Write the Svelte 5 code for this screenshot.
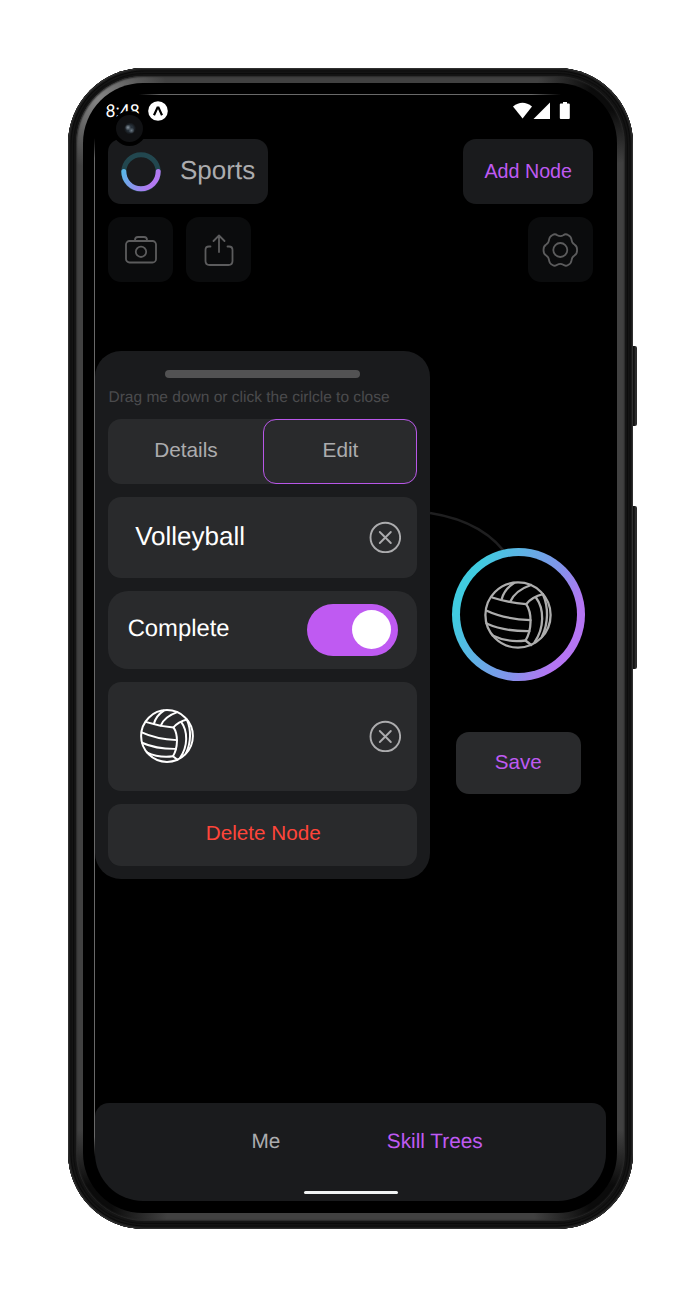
<script>
  let complete = $state(true);
  let tab = $state('Edit');
</script>

{#snippet ball(size, color, width)}
  <svg width={size} height={size} viewBox="0 0 68 68" fill="none" stroke={color} stroke-width={width} stroke-linecap="round" stroke-linejoin="round">
    <circle cx="34" cy="34" r="32.6" />
    <path d="M8.200 16.500Q24 21.600 42.200 23.200Q48 16 59 13.200" />
    <path d="M17.500 18.700Q20 8.500 30 2M26.200 20.800Q31 9.500 47 4" />
    <path d="M42.200 23.200C48.200 32 48 49 41.500 59.500L47.200 64" />
    <path d="M51.800 16.300C60.500 28 60.500 47 50.500 61.500M59 13.500C64.500 26 64.500 42 58 55.500" />
    <path d="M2.200 29.500Q20 38 46.500 39.200M2.500 42.500Q20 50.500 45.300 50.200M8.500 54.500Q24 62 41.500 59.500" />
  </svg>
{/snippet}

{#snippet clear()}
  <svg width="32" height="32" viewBox="0 0 32 32" fill="none" stroke="#acacae" stroke-width="1.900" stroke-linecap="round">
    <circle cx="16.300" cy="16.500" r="14.800" />
    <path d="M10.800 11l11 11M21.800 11l-11 11" />
  </svg>
{/snippet}

<div class="stage">
  <div class="key power"></div>
  <div class="key volume"></div>
  <div class="phone">
    <div class="band">
      <div class="bezel">
        <div class="glint-top"></div>
        <div class="glint-left"></div>
        <div class="screen">
          <div class="status">
            <span class="time">8:48</span>
            <svg class="expo" width="20" height="20" viewBox="0 0 20 20">
              <circle cx="10" cy="10" r="9.800" fill="#fff" />
              <path d="M6 14.200L9.500 6.600h1L14 14.200" fill="none" stroke="#000" stroke-width="2.200" />
            </svg>
            <svg class="signals" width="58" height="18" viewBox="0 0 58 18" fill="#fff">
              <path d="M0 4.500Q9.500-3 19 4.500L9.600 16.500z" />
              <path d="M37 .500V17H20.500z" />
              <path d="M50 0h4v1.500h1.800q1 0 1 1V16q0 1-1 1h-8q-1 0-1-1V2.500q0-1 1-1H50z" />
            </svg>
          </div>

          <header>
            <div class="tree">
              <svg width="40" height="40" viewBox="0 0 40 40" fill="none" stroke-width="5">
                <defs>
                  <linearGradient id="half" x1="2" y1="20" x2="34" y2="38" gradientUnits="userSpaceOnUse">
                    <stop stop-color="#5ab6e8" /><stop offset=".8" stop-color="#b07af0" /><stop offset="1" stop-color="#b877f2" />
                  </linearGradient>
                </defs>
                <circle cx="20" cy="20" r="17.200" stroke="#22474f" />
                <path d="M2.800 19.500a17.200 17.200 0 0 0 34.400 0" stroke="url(#half)" stroke-linecap="round" />
              </svg>
              <span>Sports</span>
            </div>
            <button class="add">Add Node</button>
          </header>

          <div class="tools">
            <button class="tool" aria-label="Camera">
              <svg width="34" height="34" viewBox="0 0 34 34">
                <rect x="2" y="8" width="30" height="21.500" rx="3.500" />
                <path d="M11 8V7q0-3 3-3h6q3 0 3 3v1" />
                <circle cx="17" cy="18.800" r="5.200" />
              </svg>
            </button>
            <button class="tool" aria-label="Share">
              <svg width="34" height="34" viewBox="0 0 34 34">
                <path d="M8.500 13.500H7q-3.500 0-3.500 3.500v11q0 4 4 4h19q4 0 4-4V17q0-3.500-3.500-3.500h-1.500M17 19V2.500M11.500 8L17 2.500 22.500 8" />
              </svg>
            </button>
            <button class="tool last" aria-label="Settings">
              <svg width="36" height="36" viewBox="0 0 36 36">
                <path d="M10.500 3C12.500 1.800 14 2.200 15.300 3.200Q18.300 4.900 21.300 3.200C22.600 2.200 24.100 1.800 26.100 3C28.500 4.300 29.300 5.300 29.500 7.500Q29.800 11 32.500 12.600C34.400 13.500 35.100 15 35.100 18C35.100 21 34.400 22.500 32.500 23.400Q29.800 25 29.500 28.500C29.300 30.700 28.500 31.700 26.100 33C24.100 34.200 22.600 33.800 21.300 32.800Q18.300 31.100 15.300 32.800C14 33.800 12.500 34.200 10.500 33C8.100 31.700 7.300 30.700 7.100 28.500Q6.800 25 4.100 23.400C2.200 22.500 1.500 21 1.500 18C1.500 15 2.200 13.500 4.100 12.600Q6.800 11 7.100 7.500C7.300 5.300 8.100 4.300 10.500 3z" />
                <circle cx="18.300" cy="18" r="7" />
              </svg>
            </button>
          </div>

          <main>
            <svg class="edge" width="180" height="120" viewBox="0 0 180 120" fill="none" stroke="#1f1f20" stroke-width="2.500">
              <path d="M0 13Q57 22 80 60" />
            </svg>
            <section class="panel">
              <div class="grip"></div>
              <p class="hint">Drag me down or click the cirlcle to close</p>
              <div class="segments">
                {#each ['Details', 'Edit'] as name}
                  <button class:active={tab === name} onclick={() => (tab = name)}>{name}</button>
                {/each}
              </div>
              <div class="card name"><span>Volleyball</span>{@render clear()}</div>
              <div class="card done">
                <span>Complete</span>
                <button class="switch" class:on={complete} aria-label="Complete" onclick={() => (complete = !complete)}><i></i></button>
              </div>
              <div class="card icon">{@render ball(54, '#fff', 2.5)}{@render clear()}</div>
              <button class="delete">Delete Node</button>
            </section>
            <aside>
              <div class="node"><div>{@render ball(68, '#adadad', 2.3)}</div></div>
              <button class="save">Save</button>
            </aside>
          </main>

          <nav>
            <div class="links"><span>Me</span><span class="current">Skill Trees</span></div>
            <div class="home"></div>
          </nav>
        </div>
        <div class="lens"><i></i></div>
      </div>
    </div>
  </div>
</div>

<style>
  :global(body) { margin: 0; background: #fff; }
  * { box-sizing: border-box; }
  .stage {
    position: relative; width: 700px; height: 1296px; padding: 67.500px;
    font-family: "Liberation Sans", Arial, sans-serif; text-rendering: geometricPrecision;
  }
  button { border: 0; padding: 0; margin: 0; font: inherit; color: inherit; background: none; }
  svg { display: block; flex: none; }
  .key { position: absolute; left: 630px; width: 7px; border-radius: 0 2px 2px 0; background: linear-gradient(90deg, #111 0 4px, #353535 6px, #222); }
  .power { top: 346px; height: 79.500px; }
  .volume { top: 505.500px; height: 163px; }
  .phone {
    position: relative; width: 565px; height: 1161px; border-radius: 76px; padding: 8px;
    background: #151515;
    box-shadow: inset 0 0 1px 1px #333, inset 0 0 0 2.500px #191919, inset 0 0 1px 3.500px #090909, inset 0 0 1px 5px #181818, inset 0 0 1px 6px #0b0b0b;
  }
  .band {
    width: 549px; height: 1145px; border-radius: 68px; padding: 7.500px;
    background:
      radial-gradient(circle at 22px 22px, #858585 0, #6e6e6e 24px, transparent 70px),
      radial-gradient(circle at 533px 16px, #0b0b0b 0 18px, transparent 72px),
      radial-gradient(circle at 16px 1129px, #0b0b0b 0 20px, transparent 76px),
      radial-gradient(circle at 533px 1129px, #0b0b0b 0 20px, transparent 76px),
      #414141;
    box-shadow: inset 0 0 1.500px 1px #292929;
  }
  .bezel { position: relative; width: 534px; height: 1130px; border-radius: 60px; padding: 12px; background: #000; }
  .glint-top, .glint-left { position: absolute; }
  .glint-top { left: 56px; top: 11px; width: 422px; height: 1.500px; background: linear-gradient(90deg, transparent, #696969 5%, #696969 93%, transparent); }
  .glint-left { left: 11px; top: 55px; width: 1.500px; height: 1019px; background: linear-gradient(transparent, #696969 2%, #696969 98%, transparent); }
  .screen {
    position: relative; width: 510.500px; height: 1106px; background: #000;
    border-radius: 40px 48px 48px 48px; overflow: hidden; display: flex; flex-direction: column;
  }
  .status { height: 44.300px; display: flex; align-items: flex-start; padding: 6px 35px 0 10.500px; color: #fff; }
  .time { font: 17.800px/20px Roboto, sans-serif; width: 42.500px; margin-top: 1px; }
  .signals { margin: 1px 0 0 auto; }
  header { display: flex; justify-content: space-between; padding: 0 13px; color: #acacae; height: 65px; }
  .tree { display: flex; align-items: center; gap: 19px; width: 160px; padding-left: 13px; border-radius: 13px; background: #1a1b1d; font-size: 26px; }
  .tree span { margin-top: -3px; }
  .add { width: 130px; border-radius: 13px; background: #1a1b1d; color: #bf5af2; font-size: 19.700px; padding: 0 0 1px 1.500px; }
  .tools { display: flex; gap: 13px; padding: 0 13px; margin-top: 13.200px; height: 64.500px; }
  .tool { width: 65px; border-radius: 13px; background: #0b0c0d; display: grid; place-items: center; }
  .tool svg { fill: none; stroke: #5c5c5d; stroke-width: 1.800; stroke-linecap: round; stroke-linejoin: round; }
  .last { margin-left: auto; }
  main { position: relative; display: flex; margin-top: 69px; height: 752px; }
  .edge { position: absolute; left: 335px; top: 149px; }
  .panel { width: 335.400px; height: 528px; border-radius: 26px; padding: 19.500px 13.200px 13px; background: #1a1b1d; color: #acacae; display: flex; flex-direction: column; }
  .grip { width: 195.500px; height: 7.500px; border-radius: 4px; background: #525253; align-self: center; }
  .hint { margin: 10px 0 12px .300px; color: #4b4b4d; font-size: 15.520px; line-height: 19px; white-space: nowrap; }
  .segments { display: flex; height: 65px; margin-bottom: 13px; border-radius: 13px; background: #292a2c; font-size: 20.800px; flex: none; }
  .segments button { flex: 1; border: 1.500px solid transparent; border-radius: 13px; padding: 0 0 2px 1px; }
  .segments .active { border-color: #b857e8; }
  .card { display: flex; align-items: center; justify-content: space-between; border-radius: 13px; background: #292a2c; color: #fff; padding-right: 16px; margin-bottom: 13px; flex: none; }
  .name { height: 81px; padding-left: 27px; font-size: 26px; }
  .name span { margin-top: -2px; }
  .done { height: 78px; padding: 0 19.500px; border-radius: 20px; font-size: 23.800px; }
  .done span { margin-top: -1px; }
  .switch { width: 91px; height: 52px; border-radius: 26px; background: #555; display: flex; align-items: center; padding: 0 6.500px; }
  .switch i { width: 39px; height: 39px; border-radius: 50%; background: #fff; }
  .on { background: #bf5af2; justify-content: flex-end; }
  .icon { height: 109px; padding-left: 32.300px; }
  .delete { flex: 1; border-radius: 13px; background: #292a2c; color: #ff453a; font-size: 20.700px; padding: 0 0 3px 1px; }
  aside { position: relative; flex: 1; display: flex; flex-direction: column; align-items: center; padding: 197px 0 0 .600px; }
  .node { width: 133px; height: 133px; border-radius: 50%; padding: 8px; background: linear-gradient(115deg, #40cbe0 18%, #8294ea 60%, #b575f3 80%, #b575f3); }
  .node div { height: 100%; border-radius: 50%; background: #000; display: grid; place-items: center; }
  .node :global(svg) { margin: .500px 1px 0 0; }
  .save { width: 125px; height: 62.500px; margin-top: 51px; border-radius: 13px; background: #292a2c; color: #bf5af2; font-size: 20.600px; padding-bottom: 2.500px; }
  nav { height: 98px; border-radius: 14px 14px 0 0; background: #1a1b1d; font-size: 20.800px; color: #acacae; display: flex; flex-direction: column; align-items: center; }
  .links { display: flex; width: 100%; padding: 27px 0 0 156.400px; line-height: 24px; }
  .links span + span { margin-left: 106.500px; }
  .current { color: #bf5af2; }
  .home { width: 94px; height: 3px; margin: 37px 0 0 1px; border-radius: 2px; background: #f0f3f3; }
  .lens { position: absolute; left: 28.500px; top: 28px; width: 35px; height: 35px; border-radius: 50%; background: #000; padding: 4px; }
  .lens i {
    display: block; height: 27px; border-radius: 50%;
    background:
      radial-gradient(circle at 12px 12.500px, #87939d 0, transparent 3px),
      radial-gradient(circle at 15.500px 15.500px, #687580 0, transparent 3px),
      radial-gradient(circle at 14px 13.500px, #27313a 0 3px, #101113 6px);
  }
</style>
